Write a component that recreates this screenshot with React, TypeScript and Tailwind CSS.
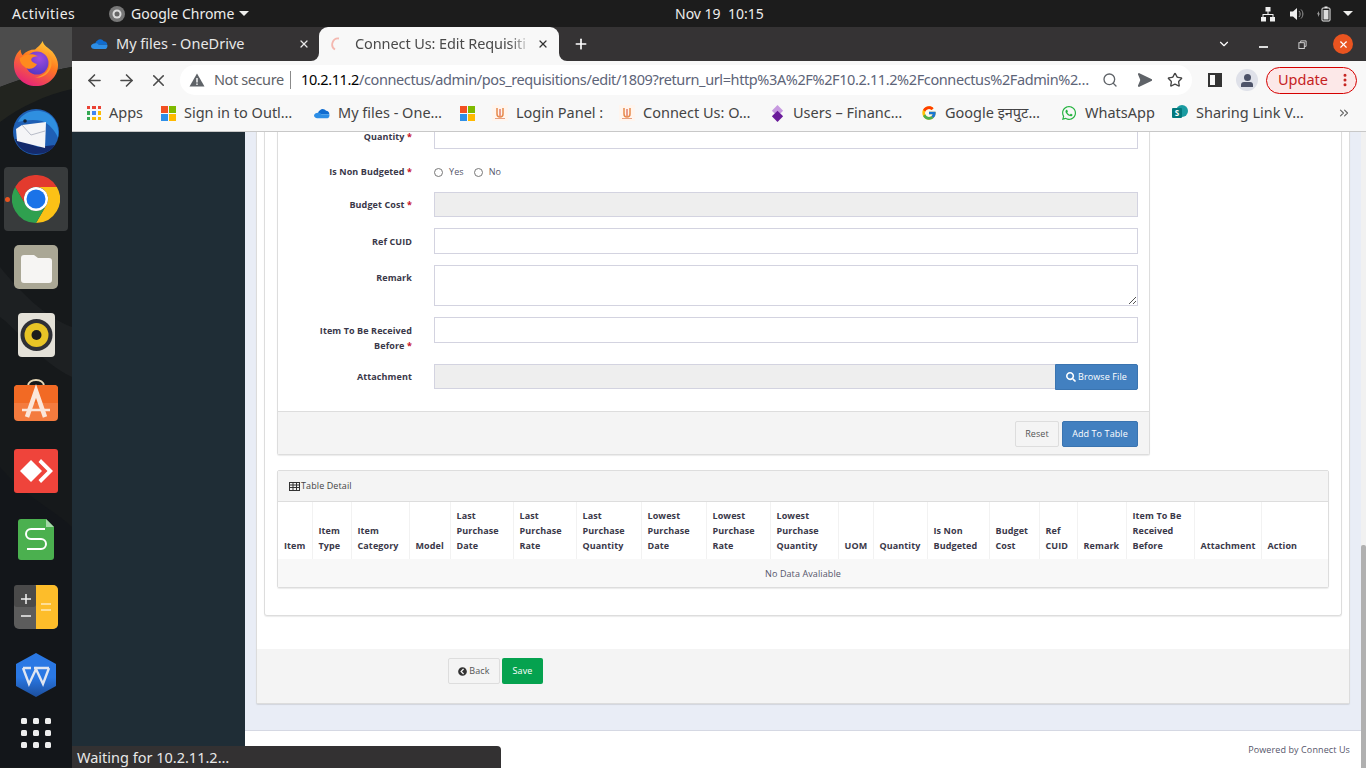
import { ArrowLeft, ArrowRight, ChevronDown, ChevronsRight, EllipsisVertical, Plus, Search, Send, Star, X } from "lucide-react";
import type { ReactNode } from "react";
import { FaChevronCircleLeft, FaSearch, FaWhatsapp } from "react-icons/fa";
import { FcGoogle } from "react-icons/fc";

const uiFont = "font-['Noto_Sans',sans-serif]";

function Firefox() {
  return (
    <svg viewBox="0 0 48 48" className="w-[46px] h-[48px]">
      <defs>
        <linearGradient id="ffBase" x1="0.8" y1="0" x2="0.3" y2="1">
          <stop offset="0" stopColor="#ffd23a" />
          <stop offset="0.45" stopColor="#ff7a1f" />
          <stop offset="1" stopColor="#e5217c" />
        </linearGradient>
        <radialGradient id="ffCore" cx="0.6" cy="0.3" r="0.8">
          <stop offset="0" stopColor="#a04be0" />
          <stop offset="1" stopColor="#4d35c0" />
        </radialGradient>
      </defs>
      <path d="M31 1c1 5 6 7 10 11 4 5 6 10 6 14 0 12-10 22-23 22S1 38 1 26C1 19 4 13 8 10c0 3 1 5 2 6 3-4 8-6 13-6 3-3 6-5 8-9z" fill="url(#ffBase)" />
      <circle cx="25" cy="24" r="12" fill="url(#ffCore)" />
      <path d="M7 19c5-4 13-6 19-2-4 0-6 1-7 3 0 3 3 4 6 5-2 5-9 7-13 3-3-2-5-5-5-9z" fill="#ff8a1e" />
      <path d="M36 12c3 4 5 9 4 15-2 8-9 13-17 12 8-1 14-6 15-13 1-5 0-10-2-14z" fill="#ff9a2a" />
    </svg>
  );
}

function Thunderbird() {
  return (
    <svg viewBox="0 0 48 48" className="w-[48px] h-[48px]">
      <circle cx="24" cy="25" r="23" fill="#1f5fb4" />
      <path d="M6 15C12 2 32 0 41 11c5 6 6 13 5 20-3-8-9-14-16-17-8-2-16-1-24 1z" fill="#2f8fe0" />
      <path d="M3 32c3 9 11 15 21 15 9 0 15-3 19-9L26 40 6 32z" fill="#142a6b" />
      <path d="M4 22L10 18L34 15L33 41L5 34Z" fill="#f5f5f7" />
      <path d="M10 18l9 10 14-4" fill="none" stroke="#b8bcc8" strokeWidth="1" />
      <circle cx="13" cy="14" r="1.800" fill="#123" />
    </svg>
  );
}

function Chrome() {
  return (
    <svg viewBox="0 0 48 48" className="w-[48px] h-[48px]">
      <path d="M3.2 12A24 24 0 0 1 44.8 12H24A12 12 0 0 0 13.6 30Z" fill="#e33b2e" />
      <path d="M44.8 12A24 24 0 0 1 24 48L34.4 30A12 12 0 0 0 24 12Z" fill="#fbc116" />
      <path d="M24 48A24 24 0 0 1 3.2 12L13.6 30A12 12 0 0 0 34.4 30Z" fill="#2fa04f" />
      <circle cx="24" cy="24" r="12" fill="#fff" />
      <circle cx="24" cy="24" r="9.5" fill="#1a73e8" />
    </svg>
  );
}

function Files() {
  return (
    <svg viewBox="0 0 44 44" className="w-[44px] h-[44px]">
      <rect width="44" height="44" rx="5" fill="#aaa795" />
      <path d="M7 13a3 3 0 0 1 3-3h10l4 3h11a3 3 0 0 1 3 3v19a3 3 0 0 1-3 3H10a3 3 0 0 1-3-3z" fill="#f6f5f3" />
    </svg>
  );
}

function Rhythmbox() {
  return (
    <svg viewBox="0 0 37 44" className="w-[37px] h-[44px]">
      <rect width="37" height="44" rx="4" fill="#e4e1d8" />
      <circle cx="18.5" cy="22" r="16" fill="#2f3036" />
      <circle cx="18.5" cy="22" r="12" fill="#e8c426" />
      <circle cx="18.5" cy="22" r="5" fill="#1c1c1c" />
    </svg>
  );
}

function SoftwareStore() {
  return (
    <svg viewBox="0 0 44 42" className="w-[44px] h-[42px] -mt-[6px]">
      <path d="M14 7c0-8 16-8 16 0" fill="none" stroke="#e8d9b8" strokeWidth="2" />
      <rect y="6" width="44" height="36" rx="4" fill="#f47b3e" />
      <path d="M0 10a4 4 0 0 1 4-4h36a4 4 0 0 1 4 4v14H0z" fill="#f26a24" />
      <path d="M13 38L22 12L31 38" fill="none" stroke="#fbe6da" strokeWidth="4.500" />
      <path d="M8 31H36" stroke="#fbe6da" strokeWidth="2.500" />
    </svg>
  );
}

function AnyDesk() {
  return (
    <svg viewBox="0 0 44 44" className="w-[44px] h-[44px]">
      <rect width="44" height="44" rx="3" fill="#ef443b" />
      <path d="M17 11l11 11-11 11L6 22z" fill="#fff" />
      <path d="M27 10l12 12-12 12-2.500-3 9-9-9-9z" fill="#fff" />
    </svg>
  );
}

function Sheets() {
  return (
    <svg viewBox="0 0 36 41" className="w-[36px] h-[41px]">
      <path d="M3 0h25l8 8v30a3 3 0 0 1-3 3H3a3 3 0 0 1-3-3V3a3 3 0 0 1 3-3z" fill="#4bb04f" />
      <path d="M28 0l8 8h-8z" fill="#a6d8a8" />
      <path d="M27 10H13a4.500 4.500 0 0 0 0 10h10a4.500 4.500 0 0 1 0 10H9" fill="none" stroke="#fff" strokeWidth="2" />
    </svg>
  );
}

function Calculator() {
  return (
    <svg viewBox="0 0 44 44" className="w-[44px] h-[44px]">
      <rect width="44" height="44" rx="5" fill="#5c5c5c" />
      <rect width="22" height="22" rx="3" fill="#4a4a4a" />
      <path d="M22 0h17a5 5 0 0 1 5 5v34a5 5 0 0 1-5 5H22z" fill="#fdbd2a" />
      <path d="M7 14h10M12 9v10M7 31h10" stroke="#f2f2f2" strokeWidth="1.500" />
      <path d="M27 19h10M27 25h10" stroke="#fff" strokeWidth="1.200" />
    </svg>
  );
}

function Wps() {
  return (
    <svg viewBox="0 0 40 44" className="w-[40px] h-[44px]">
      <defs>
        <linearGradient id="wpsFill" x1="0" y1="0" x2="0" y2="1">
          <stop offset="0.55" stopColor="#2a78e4" />
          <stop offset="1" stopColor="#1c4e9c" />
        </linearGradient>
      </defs>
      <path d="M20 0l20 11v22L20 44 0 33V11z" fill="url(#wpsFill)" />
      <path d="M7 15l6 16 7-15 7 15 6-16M7 15h8M18 15h15" fill="none" stroke="#dfe6f2" strokeWidth="2.400" />
    </svg>
  );
}

function AppGrid() {
  return (
    <div className="grid grid-cols-3 gap-x-[6px] gap-y-[6px]">
      {[0, 1, 2, 3, 4, 5, 6, 7, 8].map((n) => (
        <span key={n} className="w-[6px] h-[6px] rounded-[1.500px] bg-[#eeeeee]" />
      ))}
    </div>
  );
}

function DockSlot({ children }: { children: ReactNode }) {
  return <div className="relative h-[68px] w-full shrink-0 flex items-center justify-center">{children}</div>;
}

function Dock() {
  return (
    <aside className="relative w-[72px] shrink-0 overflow-hidden bg-[#16191b] pt-[1px] flex flex-col items-center">
      <svg viewBox="0 0 72 741" className="absolute inset-0 w-[72px] h-[741px]" preserveAspectRatio="none">
        <path d="M0 0H72V40C50 44 25 50 0 60z" fill="#4c4c4c" />
        <path d="M0 60C25 50 50 44 72 40V62C45 68 20 80 0 95z" fill="#22241f" />
        <path d="M0 240C20 265 45 290 72 300V350C40 335 15 300 0 290z" fill="#1d2022" />
        <path d="M0 440C25 470 50 480 72 500V740H0z" fill="#13161a" />
      </svg>
      <span className="absolute left-[4px] top-[140px] w-[64px] h-[64px] rounded-[4px] bg-white/15" />
      <span className="absolute left-[5px] top-[170px] w-[5px] h-[5px] rounded-full bg-[#e95420]" />
      <div className="relative h-[69px] w-full shrink-0 flex items-center justify-center"><Firefox /></div>
      <DockSlot><Thunderbird /></DockSlot>
      <DockSlot><Chrome /></DockSlot>
      <DockSlot><Files /></DockSlot>
      <DockSlot><Rhythmbox /></DockSlot>
      <DockSlot><SoftwareStore /></DockSlot>
      <DockSlot><AnyDesk /></DockSlot>
      <DockSlot><Sheets /></DockSlot>
      <DockSlot><Calculator /></DockSlot>
      <DockSlot><Wps /></DockSlot>
      <div className="relative mt-[-10px] flex h-[68px] items-center justify-center"><AppGrid /></div>
    </aside>
  );
}

function TopBar() {
  return (
    <header className={"h-[27px] shrink-0 bg-[#1c1c1c] text-[#eeeeec] text-[14px] flex items-center relative " + uiFont}>
      <span className="ml-[12px] w-[97px] tracking-[0.5px]">Activities</span>
      <svg viewBox="0 0 16 16" className="w-[16px] h-[16px]">
        <circle cx="8" cy="8" r="8" fill="#777" />
        <circle cx="8" cy="8" r="4.500" fill="#ddd" />
        <circle cx="8" cy="8" r="2.500" fill="#666" />
      </svg>
      <span className="ml-[6px]">Google Chrome</span>
      <span className="ml-[5px] w-0 h-0 border-x-[5px] border-x-transparent border-t-[5px] border-t-[#eeeeec]" />
      <span className="absolute left-[675px] whitespace-pre">Nov 19  10:15</span>
      <div className="ml-auto mr-[13px] flex items-center">
        <svg viewBox="0 0 16 16" className="w-[16px] h-[16px] mr-[13px]" fill="#eee">
          <rect x="5.500" y="1" width="5" height="4.500" />
          <rect x="1" y="11" width="5" height="4.500" />
          <rect x="10" y="11" width="5" height="4.500" />
          <path d="M7.500 5h1v3h5v3h-1V9h-9v2h-1V8h5z" />
        </svg>
        <svg viewBox="0 0 16 16" className="w-[16px] h-[16px] mr-[10px]" fill="#eee">
          <path d="M1 5.500h3L8 2v12l-4-3.500H1z" />
          <path d="M10 5c1.500 1.500 1.500 4.500 0 6M12 3.500c2.500 2.500 2.500 6.500 0 9" fill="none" stroke="#999" strokeWidth="1" />
        </svg>
        <svg viewBox="0 0 18 16" className="w-[18px] h-[18px] mr-[10px]">
          <path d="M2 8l2-3v2.500h1L3 11V8.500z" fill="#999" />
          <rect x="7" y="2" width="8" height="13" rx="1" fill="none" stroke="#eee" strokeWidth="1" />
          <rect x="9.500" y="0.500" width="3" height="1.500" fill="#eee" />
          <rect x="8.500" y="4" width="5" height="9.500" fill="#ddd" />
        </svg>
        <span className="w-0 h-0 border-x-[5px] border-x-transparent border-t-[5px] border-t-[#eeeeec]" />
      </div>
    </header>
  );
}

function OneDrive({ className }: { className: string }) {
  return (
    <svg viewBox="0 0 24 16" className={className}>
      <path d="M9 3c3-3 7-2 9 1 3 0 5 2 5 5H6c0-3 1-5 3-6z" fill="#0f6cd0" />
      <path d="M6 7c3 0 4 1 5 2h12c1 3-1 6-3 6H5c-3 0-5-2-5-4s3-4 6-4z" fill="#2d8ee6" />
    </svg>
  );
}

function WindowsLogo() {
  return (
    <span className="grid grid-cols-2 gap-[1px] w-[15px] h-[15px] shrink-0">
      <span className="bg-[#f25022]" />
      <span className="bg-[#7fba00]" />
      <span className="bg-[#2f8fe8]" />
      <span className="bg-[#ffb900]" />
    </span>
  );
}

function TabStrip() {
  return (
    <div className={"h-[34px] shrink-0 bg-[#353334] flex items-stretch text-[14.500px] " + uiFont}>
      <div className="w-[247px] flex items-center text-[#e8e8e8] pl-[19px]">
        <OneDrive className="w-[17px] h-[12px]" />
        <span className="ml-[8px]">My files - OneDrive</span>
        <X className="ml-auto mr-[9px] w-[12px] h-[12px]" strokeWidth={2.5} />
      </div>
      <div className="relative w-[240px] bg-[#f8f8f8] rounded-t-[9px] flex items-center text-[#4a4a4a] pl-[11px]">
        <span className="absolute bottom-0 -left-[8px] w-[8px] h-[8px] bg-[#f8f8f8]"><span className="block w-full h-full bg-[#353334] rounded-br-[8px]" /></span>
        <span className="absolute bottom-0 -right-[8px] w-[8px] h-[8px] bg-[#f8f8f8]"><span className="block w-full h-full bg-[#353334] rounded-bl-[8px]" /></span>
        <svg viewBox="0 0 14 14" className="w-[14px] h-[14px]">
          <path d="M9 1.500A6 6 0 0 0 5 12.500" fill="none" stroke="#f4b8b0" strokeWidth="1.800" />
        </svg>
        <span className="ml-[11px] w-[176px] whitespace-nowrap tracking-[-0.1px] [mask-image:linear-gradient(to_right,black_88%,transparent)]">Connect Us: Edit Requisiti</span>
        <X className="ml-[6px] w-[12px] h-[12px] text-[#333]" strokeWidth={2.5} />
      </div>
      <div className="flex-1 flex items-center text-white">
        <Plus className="ml-[14px] w-[16px] h-[16px]" strokeWidth={2.5} />
        <ChevronDown className="ml-auto w-[14px] h-[14px]" />
        <span className="ml-[28px] w-[9px] h-[1.500px] mt-[6px] bg-[#ddd]" />
        <svg viewBox="0 0 10 10" className="ml-[30px] w-[9px] h-[9px]" fill="none" stroke="#ddd" strokeWidth="1">
          <rect x="1" y="3" width="6" height="6.500" />
          <path d="M3 3V1h6v6H7" />
        </svg>
        <span className="ml-[26px] mr-[13px] w-[20px] h-[20px] rounded-full bg-[#e95420] text-white flex items-center justify-center">
          <X className="w-[11px] h-[11px]" strokeWidth={2.5} />
        </span>
      </div>
    </div>
  );
}

function Toolbar() {
  return (
    <div className={"h-[38px] shrink-0 bg-[#f8f8f8] flex items-center text-[#4a4a4a] " + uiFont}>
      <ArrowLeft className="ml-[13px] w-[19px] h-[19px]" strokeWidth={2} />
      <ArrowRight className="ml-[13px] w-[19px] h-[19px]" strokeWidth={2} />
      <X className="ml-[13px] w-[19px] h-[19px]" strokeWidth={2} />
      <div className="ml-[12px] h-[30px] w-[1012px] rounded-full bg-white flex items-center text-[14.500px]">
        <svg viewBox="0 0 16 16" className="ml-[9px] w-[16px] h-[16px] shrink-0">
          <path d="M8 1.500L15.500 14.500H.5z" fill="#5f6368" />
          <rect x="7.300" y="6" width="1.400" height="4.500" fill="#fff" />
          <rect x="7.300" y="11.500" width="1.400" height="1.400" fill="#fff" />
        </svg>
        <span className="ml-[9px] w-[69px] text-[#5f6368] whitespace-nowrap tracking-[-0.4px]">Not secure</span>
        <span className="ml-[7px] h-[18px] w-px bg-[#8a8a8a]" />
        <span className="ml-[10px] w-[790px] shrink-0 whitespace-nowrap text-[#5d6478] tracking-[-0.39px]"><span className="text-black">10.2.11.2</span>/connectus/admin/pos_requisitions/edit/1809?return_url=http%3A%2F%2F10.2.11.2%2Fconnectus%2Fadmin%2…</span>
        <Search className="ml-[11px] w-[16px] h-[16px] text-[#5f6368] shrink-0" />
        <Send className="ml-[16px] w-[16px] h-[16px] text-[#5f6368] fill-[#5f6368] rotate-45 shrink-0" />
        <Star className="ml-[17px] w-[16px] h-[16px] text-[#444] shrink-0" />
      </div>
      <span className="ml-[16px] w-[14px] h-[14px] border-2 border-[#333] flex justify-end"><span className="block w-[5px] h-full bg-[#333]" /></span>
      <span className="ml-[14px] w-[22px] h-[22px] rounded-full bg-[#dfe1e9] flex flex-col items-center justify-center">
        <span className="block w-[7px] h-[7px] rounded-full bg-[#4c5268]" />
        <span className="block w-[12px] h-[5px] mt-[1px] rounded-t-[3px] bg-[#4c5268]" />
      </span>
      <div className="ml-[8px] w-[91px] h-[27px] rounded-full border border-[#d50000] bg-[#fce8e8] text-[#c5221f] text-[14.500px] flex items-center pl-[11px]">
        Update
        <EllipsisVertical className="ml-auto mr-[3px] w-[16px] h-[16px]" strokeWidth={2.5} />
      </div>
    </div>
  );
}

function AppsIcon() {
  const colors = ["bg-[#ea4335]", "bg-[#ea4335]", "bg-[#ea4335]", "bg-[#34a853]", "bg-[#4285f4]", "bg-[#fbbc05]", "bg-[#34a853]", "bg-[#fbbc05]", "bg-[#fbbc05]"];
  return (
    <span className="grid grid-cols-3 gap-[2px] w-[14px] h-[14px] shrink-0">
      {colors.map((c, i) => <span key={i} className={c} />)}
    </span>
  );
}

function ConnectIcon() {
  return (
    <svg viewBox="0 0 16 16" className="w-[16px] h-[16px] shrink-0">
      <rect width="16" height="16" fill="#fff5ee" />
      <path d="M5 3v6a3 3 0 0 0 6 0V3" fill="none" stroke="#e8894a" strokeWidth="1.500" />
      <path d="M8 4v7" stroke="#d4402c" strokeWidth="1" />
      <rect x="3" y="13" width="10" height="1" fill="#e8a080" />
    </svg>
  );
}

function DiamondIcon() {
  return (
    <svg viewBox="0 0 16 18" className="w-[15px] h-[17px] shrink-0">
      <path d="M8 0l6 6-6 6-6-6z" fill="#c79ae0" />
      <path d="M8 6l6 6-6 6-6-6z" fill="#6a1b9a" />
    </svg>
  );
}

function SharePointIcon() {
  return (
    <span className="relative w-[16px] h-[16px] shrink-0">
      <span className="absolute right-0 top-0 w-[12px] h-[12px] rounded-full bg-[#1a9ba1]" />
      <span className="absolute left-0 top-[3px] w-[10px] h-[10px] rounded-[1px] bg-[#03787c] text-white text-[8px] leading-[10px] font-bold text-center">S</span>
    </span>
  );
}

const bookmarks = [
  { label: "Apps", box: "w-[74px]", icon: <AppsIcon /> },
  { label: "Sign in to Outl…", box: "w-[153px]", icon: <WindowsLogo /> },
  { label: "My files - One…", box: "w-[146px]", icon: <OneDrive className="w-[16px] h-[11px] shrink-0" /> },
  { label: "", box: "w-[32px]", icon: <WindowsLogo /> },
  { label: "Login Panel :", box: "w-[127px]", icon: <ConnectIcon /> },
  { label: "Connect Us: O…", box: "w-[151px]", icon: <ConnectIcon /> },
  { label: "Users – Financ…", box: "w-[151px]", icon: <DiamondIcon /> },
  { label: "Google इनपुट…", box: "w-[140px]", icon: <FcGoogle className="w-[16px] h-[16px] shrink-0" /> },
  { label: "WhatsApp", box: "w-[111px]", icon: <FaWhatsapp className="w-[16px] h-[16px] shrink-0 text-[#25b340]" /> },
  { label: "Sharing Link V…", box: "w-[165px]", icon: <SharePointIcon /> },
];

function BookmarkBar() {
  return (
    <div className={"h-[33px] pb-[4px] shrink-0 bg-[#f8f8f8] border-b border-[#c8c8c8] flex items-center pl-[15px] text-[14.500px] text-[#444] " + uiFont}>
      {bookmarks.map((b, i) => (
        <div key={i} className={"flex items-center gap-[8px] shrink-0 " + b.box}>
          {b.icon}
          {b.label && <span className="whitespace-nowrap">{b.label}</span>}
        </div>
      ))}
      <ChevronsRight className="w-[14px] h-[14px] text-[#666]" />
    </div>
  );
}

function TableGlyph() {
  return (
    <svg viewBox="0 0 11 9" className="w-[11px] h-[9px] mr-[1px] shrink-0" fill="none" stroke="#333" strokeWidth="1">
      <rect x="0.500" y="0.500" width="10" height="8" />
      <path d="M0 3H11M0 5.500H11M4 0V9M7.500 0V9" />
    </svg>
  );
}

function Label({ children, req, pad = "pt-[6px]" }: { children: ReactNode; req?: boolean; pad?: string }) {
  return (
    <div className={"w-[134px] pl-[20px] shrink-0 text-right font-bold text-[#3a3849] leading-[15px] " + pad}>
      {children}
      {req && <span className="text-[#c8102e]"> *</span>}
    </div>
  );
}

function Row({ children }: { children: ReactNode }) {
  return <div className="flex mb-[11px]">{children}</div>;
}

const inputBox = "ml-[22px] w-[704px] border border-[#d3d3e0] bg-white";

function FormPanel() {
  return (
    <div className="w-[873px] ml-[12px] border border-[#dddddd] border-t-0 rounded-b-[2px] shadow-[0_1px_1px_rgba(0,0,0,0.08)]">
      <div className="pb-[21px]">
        <Row><Label req>Quantity</Label><div className={inputBox + " h-[26px]"} /></Row>
        <Row>
          <Label req pad="pt-[4px]">Is Non Budgeted</Label>
          <div className="ml-[22px] h-[21px] pt-[3px] flex items-center text-[#55556a]">
            <span className="w-[9px] h-[9px] rounded-full border border-[#777] bg-white" />
            <span className="ml-[6px]">Yes</span>
            <span className="ml-[10px] w-[9px] h-[9px] rounded-full border border-[#777] bg-white" />
            <span className="ml-[6px]">No</span>
          </div>
        </Row>
        <Row><Label req pad="pt-[5px]">Budget Cost</Label><div className={inputBox + " h-[25px] !bg-[#eeeeee]"} /></Row>
        <Row><Label>Ref CUID</Label><div className={inputBox + " h-[26px]"} /></Row>
        <Row>
          <Label pad="pt-[5px]">Remark</Label>
          <div className={inputBox + " h-[41px] relative"}>
            <svg viewBox="0 0 9 9" className="absolute right-0 bottom-0 w-[9px] h-[9px]" stroke="#555" strokeWidth="1">
              <path d="M1 8L8 1M5 8L8 5" />
            </svg>
          </div>
        </Row>
        <Row><Label req>Item To Be Received Before</Label><div className={inputBox + " h-[26px]"} /></Row>
        <div className="flex">
          <Label pad="pt-[5px]">Attachment</Label>
          <div className="ml-[22px] w-[704px] flex">
            <div className="flex-1 h-[25px] bg-[#eeeeee] border border-[#d3d3e0] border-r-0" />
            <button className="w-[83px] h-[26px] bg-[#4280c0] border border-[#3a74b0] rounded-r-[2px] text-white flex items-center justify-center gap-[2px]">
              <FaSearch className="w-[10px] h-[10px]" />
              Browse File
            </button>
          </div>
        </div>
      </div>
      <div className="h-[43px] pt-[1px] bg-[#f4f4f4] border-t border-[#dddddd] flex items-center justify-end pr-[11px] gap-[3px]">
        <button className="w-[44px] h-[26px] border border-[#dddddd] rounded-[2px] bg-[#f4f4f4] text-[#555]">Reset</button>
        <button className="w-[76px] h-[26px] bg-[#4280c0] border border-[#3a74b0] rounded-[2px] text-white">Add To Table</button>
      </div>
    </div>
  );
}

const columns = [
  { label: "Item", w: "w-[34px]" },
  { label: "Item Type", w: "w-[39px]" },
  { label: "Item Category", w: "w-[58px]" },
  { label: "Model", w: "w-[41px]" },
  { label: "Last Purchase Date", w: "w-[63px]" },
  { label: "Last Purchase Rate", w: "w-[63px]" },
  { label: "Last Purchase Quantity", w: "w-[65px]" },
  { label: "Lowest Purchase Date", w: "w-[65px]" },
  { label: "Lowest Purchase Rate", w: "w-[64px]" },
  { label: "Lowest Purchase Quantity", w: "w-[68px]" },
  { label: "UOM", w: "w-[35px]" },
  { label: "Quantity", w: "w-[54px]" },
  { label: "Is Non Budgeted", w: "w-[62px]" },
  { label: "Budget Cost", w: "w-[50px]" },
  { label: "Ref CUID", w: "w-[38px]" },
  { label: "Remark", w: "w-[49px]" },
  { label: "Item To Be Received Before", w: "w-[68px]" },
  { label: "Attachment", w: "w-[67px]" },
  { label: "Action", w: "w-[67px]" },
];

function TablePanel() {
  return (
    <div className="w-[1052px] ml-[12px] mt-[15px] border border-[#dddddd] rounded-[2px] shadow-[0_1px_1px_rgba(0,0,0,0.08)] overflow-hidden">
      <div className="h-[31px] bg-[#f4f4f4] border-b border-[#dddddd] flex items-center pl-[11px] text-[#444444]">
        <TableGlyph />
        Table Detail
      </div>
      <table className="w-full table-fixed border-collapse">
        <colgroup>
          {columns.map((c) => <col key={c.label} className={c.w} />)}
        </colgroup>
        <thead>
          <tr className="h-[57px]">
            {columns.map((c) => (
              <th key={c.label} className="align-bottom text-left font-bold text-[#3a3849] leading-[15px] pl-[6px] pr-0 pb-[6px] border-r border-[#f2f2f2] last:border-r-0">
                {c.label}
              </th>
            ))}
          </tr>
        </thead>
        <tbody>
          <tr className="h-[28px] bg-[#f8f8f8]">
            <td colSpan={19} className="text-center text-[#55556a] pt-[1px]">No Data Avaliable</td>
          </tr>
        </tbody>
      </table>
    </div>
  );
}

function PageContent() {
  return (
    <main className="flex-1 min-w-0 overflow-hidden flex flex-col justify-end bg-[#e9edf6] font-['Open_Sans',sans-serif] text-[9px] tracking-[0.1px]">
      <div className="mx-[11px] mb-[26px] shrink-0 border border-[#dcdcdc] bg-white shadow-[0_1px_1px_rgba(0,0,0,0.1)] rounded-b-[2px]">
        <div className="mx-[7px] mb-[33px] pb-[27px] border border-t-0 border-[#dddddd] rounded-b-[3px] shadow-[0_1px_1px_rgba(0,0,0,0.08)]">
          <FormPanel />
          <TablePanel />
        </div>
        <div className="h-[54px] bg-[#f4f4f4] flex items-start pt-[9px] pl-[191px] gap-[2px]">
          <button className="w-[52px] h-[26px] border border-[#dddddd] rounded-[2px] bg-[#f4f4f4] text-[#555] flex items-center justify-center gap-[2px]">
            <FaChevronCircleLeft className="w-[9px] h-[9px] text-[#333]" />
            Back
          </button>
          <button className="w-[41px] h-[26px] rounded-[2px] bg-[#05a24f] text-white">Save</button>
        </div>
      </div>
      <footer className="h-[38px] shrink-0 bg-white border-t border-[#d5d8e3] text-right pr-[11px] pt-[13px] leading-[12px] text-[#55556a]">
        Powered by Connect Us
      </footer>
    </main>
  );
}

function ScrollBar() {
  return (
    <div className="w-[5px] shrink-0 bg-[#f1f1f1] flex flex-col justify-end">
      <div className="h-[223px] bg-[#b0b0b0] rounded-t-[2px]" />
    </div>
  );
}

export default function App() {
  return (
    <div className="w-[1366px] h-[768px] overflow-hidden flex flex-col bg-black">
      <TopBar />
      <div className="flex-1 min-h-0 flex">
        <Dock />
        <div className="relative flex-1 min-w-0 flex flex-col">
          <TabStrip />
          <Toolbar />
          <BookmarkBar />
          <div className="flex-1 min-h-0 flex">
            <div className="w-[173px] shrink-0 bg-[#1f2d36]" />
            <PageContent />
            <ScrollBar />
          </div>
          <div className={"absolute left-0 bottom-0 w-[429px] h-[22px] bg-[#333132] rounded-tr-[4px] text-[#e8e8e8] text-[14.5px] leading-[22px] pl-[5px] " + uiFont}>
            Waiting for 10.2.11.2…
          </div>
        </div>
      </div>
    </div>
  );
}
